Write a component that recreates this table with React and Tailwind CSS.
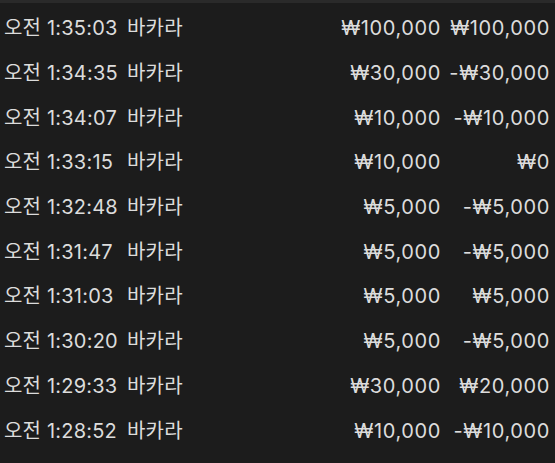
import React from 'react';

const rows = [
  { time: '오전 1:35:03', game: '바카라', bet: '₩100,000', result: '₩100,000' },
  { time: '오전 1:34:35', game: '바카라', bet: '₩30,000', result: '-₩30,000' },
  { time: '오전 1:34:07', game: '바카라', bet: '₩10,000', result: '-₩10,000' },
  { time: '오전 1:33:15', game: '바카라', bet: '₩10,000', result: '₩0' },
  { time: '오전 1:32:48', game: '바카라', bet: '₩5,000', result: '-₩5,000' },
  { time: '오전 1:31:47', game: '바카라', bet: '₩5,000', result: '-₩5,000' },
  { time: '오전 1:31:03', game: '바카라', bet: '₩5,000', result: '₩5,000' },
  { time: '오전 1:30:20', game: '바카라', bet: '₩5,000', result: '-₩5,000' },
  { time: '오전 1:29:33', game: '바카라', bet: '₩30,000', result: '₩20,000' },
  { time: '오전 1:28:52', game: '바카라', bet: '₩10,000', result: '-₩10,000' },
];

export default function App() {
  return (
    <div
      className="w-[555px] h-[463px] overflow-hidden bg-[#1c1c1c] text-[#dcdcdc] border-t-[3px] border-[#2a2a2a]"
      style={{ fontFamily: 'Inter, "Noto Sans CJK KR", sans-serif' }}
    >
      <div className="flex flex-col pt-[3px]">
        {rows.map((r, i) => (
          <div key={i} className="h-[44.7px] flex items-center pl-[4px] pr-[5px] text-[20px]">
            <span className="w-[123px] whitespace-nowrap tracking-[0.2px]">{r.time}</span>
            <span className="flex-1 whitespace-nowrap tracking-[0.2px]">{r.game}</span>
            <span className="text-right whitespace-nowrap tracking-[0.6px]">{r.bet}</span>
            <span className="w-[109px] text-right whitespace-nowrap tracking-[0.6px]">{r.result}</span>
          </div>
        ))}
      </div>
    </div>
  );
}
